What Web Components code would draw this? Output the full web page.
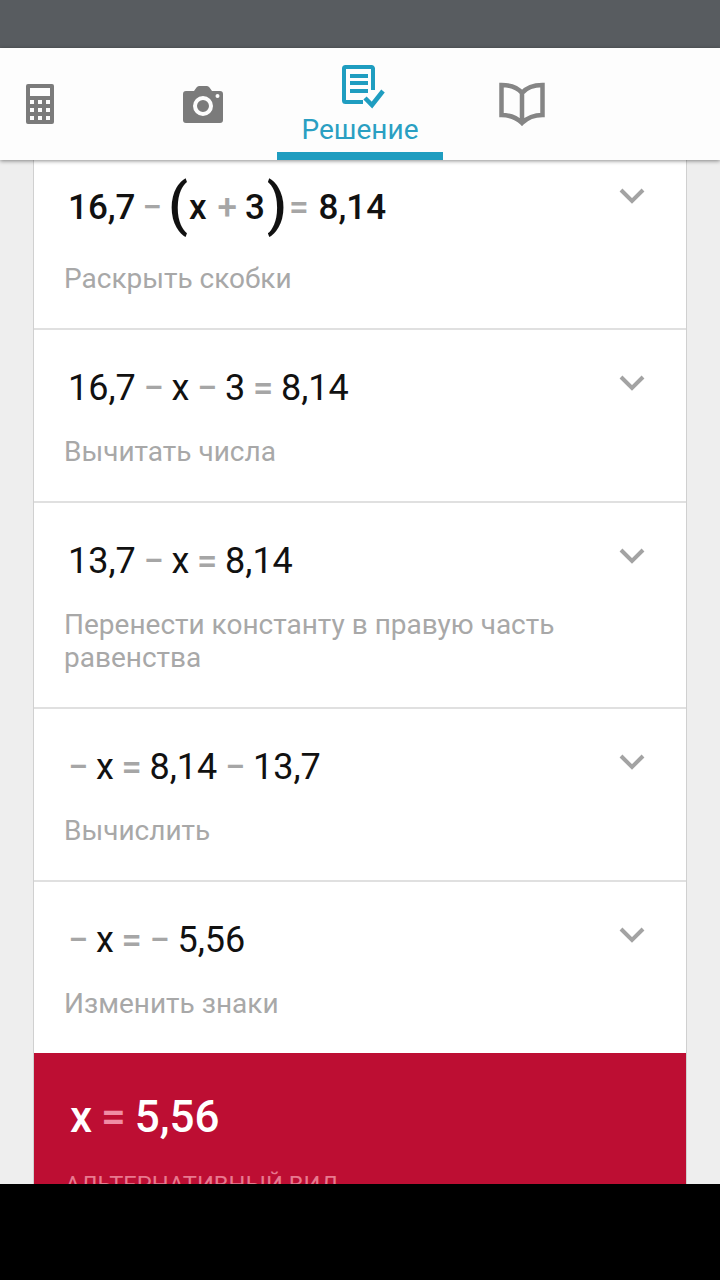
<!DOCTYPE html>
<html>
<head>
<meta charset="utf-8">
<title>Решение</title>
<style>
html, body { margin: 0; height: 100%; background: #000; }
</style>
</head>
<body>
<solver-app>
    <tab-bar slot="tabs">
        <tab-item style="width:129px;padding-right:49px">
            <svg width="30" height="42" viewBox="0 0 30 42"><path fill="#7b7b7b" fill-rule="evenodd" d="M3 1h24a2 2 0 0 1 2 2v36a2 2 0 0 1-2 2H3a2 2 0 0 1-2-2V3a2 2 0 0 1 2-2zM5 5v8h20V5zM5 17v4h4v-4zM13 17v4h4v-4zM21 17v4h4v-4zM5 25v4h4v-4zM13 25v4h4v-4zM21 25v4h4v-4zM5 33v4h4v-4zM13 33v4h4v-4zM21 33v4h4v-4z"/></svg>
        </tab-item>
        <tab-item style="width:148px">
            <svg width="40" height="37" viewBox="0 0 40 37"><path fill="#7b7b7b" fill-rule="evenodd" d="M3 5h8l2.500-3.500Q14.500 0 16 0h8q1.500 0 2.500 1.500L29 5h8a3 3 0 0 1 3 3v26a3 3 0 0 1-3 3H3a3 3 0 0 1-3-3V8a3 3 0 0 1 3-3zM20 10a10 10 0 1 0 0 20 10 10 0 0 0 0-20zM20 14a6 6 0 1 1 0 12 6 6 0 0 1 0-12zM34.500 8a2 2 0 1 0 0 4 2 2 0 0 0 0-4z"/></svg>
        </tab-item>
        <tab-item active label="Решение" style="width:166px">
            <svg style="margin-left:7px" width="44" height="44" viewBox="0 0 44 44"><g fill="none" stroke="#1f9dc0"><path stroke-width="4" d="M31 25V3.500a1.500 1.500 0 0 0-1.500-1.500H3.500A1.500 1.500 0 0 0 2 3.500v32A1.500 1.500 0 0 0 3.500 37H21"/><path stroke-width="4" d="M8 11h18M8 18h18M8 26h18"/><path stroke-width="4.500" d="M23 33l7 7 11-14"/></g></svg>
        </tab-item>
        <tab-item style="width:158px">
            <svg width="46" height="44" viewBox="0 0 46 44"><path fill="none" stroke="#858585" stroke-width="4.500" stroke-linejoin="miter" d="M23 11C18 5 10 3 2.500 3v30C10 33 18 36 23 41c5-5 13-8 20.500-8V3C36 3 28 5 23 11zM23 11v30"/></svg>
        </tab-item>
    </tab-bar>

    <step-row class="first">
        <math-line slot="eq" strong>16,7 <math-op>−</math-op> <math-paren style="margin-right:1px">(</math-paren>x <math-op style="margin:0 1px 0 4px">+</math-op> 3<math-paren style="margin:0 -5px 0 2px">)</math-paren> <math-op style="margin-right:3px">=</math-op> 8,14</math-line>
        Раскрыть скобки
    </step-row>
    <step-row>
        <math-line slot="eq">16,7 <math-op>−</math-op> x <math-op>−</math-op> 3 <math-op>=</math-op> 8,14</math-line>
        Вычитать числа
    </step-row>
    <step-row>
        <math-line slot="eq">13,7 <math-op>−</math-op> x <math-op>=</math-op> 8,14</math-line>
        Перенести константу в правую часть равенства
    </step-row>
    <step-row>
        <math-line slot="eq"><math-op>−</math-op> x <math-op>=</math-op> 8,14 <math-op>−</math-op> 13,7</math-line>
        Вычислить
    </step-row>
    <step-row class="last">
        <math-line slot="eq"><math-op>−</math-op> x <math-op>=</math-op> <math-op>−</math-op> 5,56</math-line>
        Изменить знаки
    </step-row>
    <answer-card>
        <span slot="result">x <answer-eq>=</answer-eq> 5,56</span>
        АЛЬТЕРНАТИВНЫЙ ВИД
    </answer-card>
</solver-app>

<script>
// the page frame: status bar, tabs, scrolled card, black nav bar
class SolverApp extends HTMLElement
{
    constructor()
    {
        super();
        this.attachShadow({mode: 'open'}).innerHTML = `
            <style>
                :host { display: flex; flex-direction: column; width: 720px; height: 1280px; overflow: hidden; font-family: Roboto, "Noto Sans", sans-serif; }
                .status { flex: 0 0 48px; background: #585c60; }
                .tabs { flex: 0 0 112px; position: relative; z-index: 1; background: #fdfdfd; box-shadow: 0 1px 4px rgba(0,0,0,.45); }
                .scroll { flex: 0 0 1024px; overflow: hidden; background: #eeeeee; padding: 0 33px; box-sizing: border-box; }
                .card { display: flex; flex-direction: column; box-sizing: border-box; background: #fff; border: solid #d0d0d0; border-width: 0 1px; height: 100%; }
                .nav { flex: 0 0 96px; background: #000; }
            </style>
            <div class="status"></div>
            <div class="tabs"><slot name="tabs"></slot></div>
            <div class="scroll"><div class="card"><slot></slot></div></div>
            <div class="nav"></div>`;
    }
}
customElements.define('solver-app', SolverApp);

class TabBar extends HTMLElement
{
    constructor()
    {
        super();
        this.attachShadow({mode: 'open'}).innerHTML = `
            <style>:host { display: flex; height: 112px; }</style>
            <slot></slot>`;
    }
}
customElements.define('tab-bar', TabBar);

class TabItem extends HTMLElement
{
    constructor()
    {
        super();
        this.attachShadow({mode: 'open'}).innerHTML = `
            <style>
                :host { display: flex; flex-direction: column; align-items: center; justify-content: center; box-sizing: border-box; height: 112px; }
                :host([active]) { justify-content: flex-start; padding-top: 17px; border-bottom: 8px solid #1f9dc0; }
                .label { color: #2a9fc2; font-size: 28px; line-height: 32px; margin-top: 5px; }
                .label:empty { display: none; }
                ::slotted(svg) { display: block; }
            </style>
            <slot></slot>
            <div class="label"></div>`;
    }

    connectedCallback()
    {
        this.shadowRoot.querySelector('.label').textContent = this.getAttribute('label') || '';
    }
}
customElements.define('tab-item', TabItem);

class StepRow extends HTMLElement
{
    constructor()
    {
        super();
        this.attachShadow({mode: 'open'}).innerHTML = `
            <style>
                :host { display: block; position: relative; box-sizing: border-box; padding: 37px 31px 33px 30px; border-bottom: 2px solid #e0e0e0; }
                :host(.first) { height: 171px; padding-top: 20px; }
                :host(.last) { border-bottom: 0; }
                .hint { margin-top: 26px; font-size: 28px; line-height: 33px; color: #a8a8a8; padding-right: 30px; }
                svg { position: absolute; right: 41px; top: 45px; }
                :host(.first) svg { top: 28px; }
            </style>
            <slot name="eq"></slot>
            <div class="hint"><slot></slot></div>
            <svg width="26" height="16" viewBox="0 0 26 16"><path fill="none" stroke="#a3a3a3" stroke-width="4" d="M2 2l11 11L24 2"/></svg>`;
    }
}
customElements.define('step-row', StepRow);

class MathLine extends HTMLElement
{
    constructor()
    {
        super();
        // no whitespace between the tags: this text flows inline
        this.attachShadow({mode: 'open'}).innerHTML = `<style>
                :host { display: block; height: 42px; padding-left: 4px; font-size: 36px; line-height: 42px; color: #111; white-space: nowrap; word-spacing: -1.200px; }
                :host([strong]) { font-size: 35px; font-weight: 500; height: 56px; line-height: 56px; word-spacing: -1.800px; }
            </style><slot></slot>`;
    }
}
customElements.define('math-line', MathLine);

class MathOp extends HTMLElement
{
    constructor()
    {
        super();
        this.attachShadow({mode: 'open'}).innerHTML = `<style>:host { color: #a6a6a6; font-weight: 500; }</style><slot></slot>`;
    }
}
customElements.define('math-op', MathOp);

class MathParen extends HTMLElement
{
    constructor()
    {
        super();
        this.attachShadow({mode: 'open'}).innerHTML = `<style>:host { font-size: 58px; line-height: 42px; vertical-align: -5px; color: #111; font-weight: 500; margin: 0 -1px; }</style><slot></slot>`;
    }
}
customElements.define('math-paren', MathParen);

class AnswerCard extends HTMLElement
{
    constructor()
    {
        super();
        this.attachShadow({mode: 'open'}).innerHTML = `
            <style>
                :host { display: block; flex: 1; box-sizing: border-box; background: #bd0e33; padding: 38px 31px 0; }
                .result { padding-left: 5px; font-size: 44px; line-height: 52px; font-weight: 500; color: #fff; white-space: nowrap; word-spacing: -2px; }
                .alt { margin-top: 28px; font-size: 23.700px; line-height: 28px; color: #e8798f; }
            </style>
            <div class="result"><slot name="result"></slot></div>
            <div class="alt"><slot></slot></div>`;
    }
}
customElements.define('answer-card', AnswerCard);

class AnswerEq extends HTMLElement
{
    constructor()
    {
        super();
        this.attachShadow({mode: 'open'}).innerHTML = `<style>:host { color: #f08ca4; }</style><slot></slot>`;
    }
}
customElements.define('answer-eq', AnswerEq);
</script>
</body>
</html>
